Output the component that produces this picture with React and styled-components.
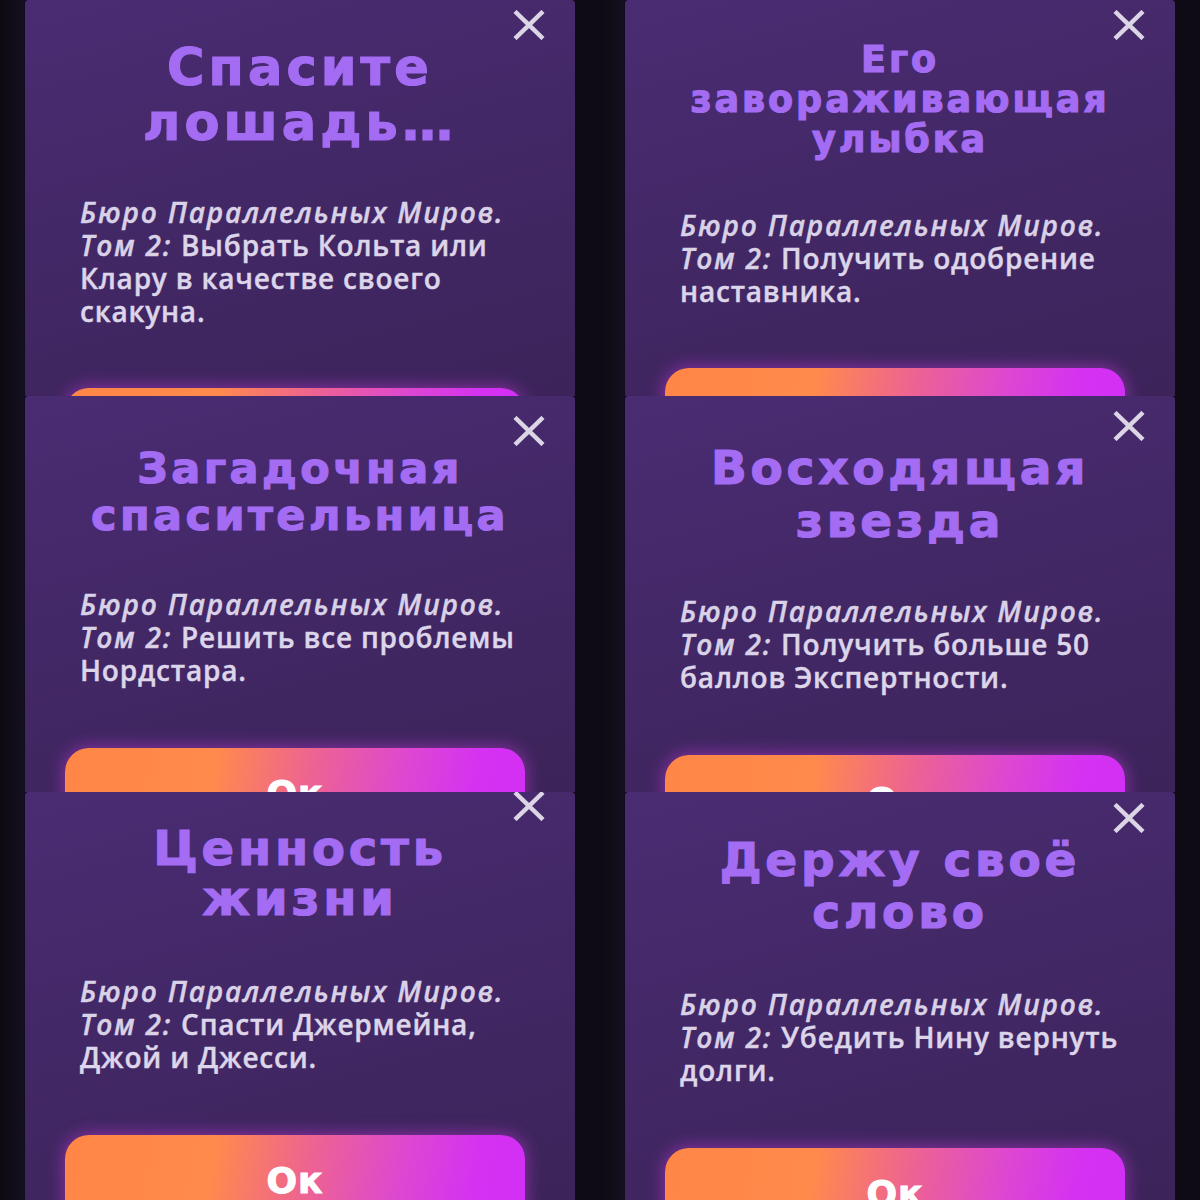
import React from 'react';
import styled, { createGlobalStyle } from 'styled-components';

const GlobalStyle = createGlobalStyle`
  html, body {
    margin: 0;
    padding: 0;
    background: #0e0b14;
  }
`;

const BODY_LH = 33;

const cards = [
  {
    title: ['Спасите', 'лошадь…'],
    titleSize: 51,
    titleLh: 55,
    titleTop: 40,
    closeTop: 10,
    body: [
      [['Бюро Параллельных Миров.', true]],
      [['Том 2: ', true], ['Выбрать Кольта или', false]],
      [['Клару в качестве своего', false]],
      [['скакуна.', false]],
    ],
    bodyTop: 196,
    buttonTop: 388,
  },
  {
    title: ['Его', 'завораживающая', 'улыбка'],
    titleSize: 36.5,
    titleLh: 40,
    titleTop: 40,
    closeTop: 10,
    body: [
      [['Бюро Параллельных Миров.', true]],
      [['Том 2: ', true], ['Получить одобрение', false]],
      [['наставника.', false]],
    ],
    bodyTop: 209,
    buttonTop: 368,
  },
  {
    title: ['Загадочная', 'спасительница'],
    titleSize: 43,
    titleLh: 47,
    titleTop: 49,
    closeTop: 20,
    body: [
      [['Бюро Параллельных Миров.', true]],
      [['Том 2: ', true], ['Решить все проблемы', false]],
      [['Нордстара.', false]],
    ],
    bodyTop: 192,
    buttonTop: 352,
  },
  {
    title: ['Восходящая', 'звезда'],
    titleSize: 47,
    titleLh: 53,
    titleTop: 45,
    closeTop: 15,
    body: [
      [['Бюро Параллельных Миров.', true]],
      [['Том 2: ', true], ['Получить больше 50', false]],
      [['баллов Экспертности.', false]],
    ],
    bodyTop: 199,
    buttonTop: 359,
  },
  {
    title: ['Ценность', 'жизни'],
    titleSize: 48,
    titleLh: 50,
    titleTop: 31,
    closeTop: -1,
    body: [
      [['Бюро Параллельных Миров.', true]],
      [['Том 2: ', true], ['Спасти Джермейна,', false]],
      [['Джой и Джесси.', false]],
    ],
    bodyTop: 183,
    buttonTop: 343,
  },
  {
    title: ['Держу своё', 'слово'],
    titleSize: 47,
    titleLh: 52,
    titleTop: 42,
    closeTop: 11,
    body: [
      [['Бюро Параллельных Миров.', true]],
      [['Том 2: ', true], ['Убедить Нину вернуть', false]],
      [['долги.', false]],
    ],
    bodyTop: 196,
    buttonTop: 356,
  },
];

const Collage = styled.div`
  display: grid;
  grid-template-columns: 600px 600px;
  grid-template-rows: 396px 396px 408px;
  width: 1200px;
  height: 1200px;
  overflow: hidden;
`;

const Cell = styled.div`
  position: relative;
  overflow: hidden;
  background: linear-gradient(90deg, #0c0a12 0%, #151020 4%, #0e0b14 100%);
  padding: 0 25px;
`;

const Dialog = styled.div`
  position: relative;
  height: 100%;
  display: flex;
  flex-direction: column;
  background: linear-gradient(165deg, #4a2c73 0%, #432867 45%, #3c2459 100%);
  box-shadow: 0 0 0 1px rgba(20, 10, 30, 0.6);
  border-radius: 4px 4px 0 0;
`;

const Close = styled.button`
  position: absolute;
  top: ${p => p.$top}px;
  right: 29px;
  width: 34px;
  height: 30px;
  padding: 0;
  border: none;
  background: none;
  cursor: pointer;

  svg {
    display: block;
  }
`;

const Title = styled.h2`
  margin: ${p => p.$top}px 0 0;
  font-family: 'DejaVu Sans', 'Open Sans', sans-serif;
  font-weight: 700;
  font-size: ${p => p.$size}px;
  line-height: ${p => p.$lh}px;
  letter-spacing: 0.08em;
  text-align: center;
  color: #a46cf2;
  -webkit-text-stroke: 1.2px #a46cf2;
`;

const TitleLine = styled.span`
  display: block;
  white-space: nowrap;
`;

const Body = styled.p`
  margin: ${p => p.$top}px 0 0;
  padding-left: 55px;
  font-family: 'Open Sans', 'DejaVu Sans', sans-serif;
  font-weight: 600;
  font-size: 28px;
  line-height: ${BODY_LH}px;
  letter-spacing: 0.8px;
  color: #ddd5e9;
  -webkit-text-stroke: 0.4px #ddd5e9;
`;

const BodyLine = styled.span`
  display: block;
  white-space: nowrap;
`;

const Book = styled.em`
  font-style: italic;
  letter-spacing: 1.8px;
  color: #d9d1e6;
`;

const OkButton = styled.button`
  flex-shrink: 0;
  margin: ${p => p.$top}px 0 0 40px;
  width: 460px;
  height: 90px;
  border: none;
  border-radius: 24px;
  background: linear-gradient(100deg, #ff8646 0%, #ff8a4c 32%, #ee6490 52%, #dd48d0 72%, #d531f2 88%, #d22ff5 100%);
  box-shadow: 0 0 16px 2px rgba(214, 60, 240, 0.45);
  font-family: 'DejaVu Sans', sans-serif;
  font-weight: 700;
  font-size: 36px;
  letter-spacing: 1px;
  color: #ffffff;
  -webkit-text-stroke: 1px #ffffff;
  cursor: pointer;
`;

const CloseIcon = () => (
  <svg width="34" height="30" viewBox="0 0 34 30">
    <path d="M3 1.5 L31 28.5 M31 1.5 L3 28.5" stroke="#dcd5e6" strokeWidth="4.5" strokeLinecap="butt" fill="none" />
  </svg>
);

const Card = ({ card }) => {
  const titleEnd = card.titleTop + card.title.length * card.titleLh;
  const bodyEnd = card.bodyTop + card.body.length * BODY_LH;
  return (
    <Cell>
      <Dialog>
        <Close $top={card.closeTop} aria-label="Закрыть">
          <CloseIcon />
        </Close>
        <Title $top={card.titleTop} $size={card.titleSize} $lh={card.titleLh}>
          {card.title.map(line => (
            <TitleLine key={line}>{line}</TitleLine>
          ))}
        </Title>
        <Body $top={card.bodyTop - titleEnd}>
          {card.body.map((line, i) => (
            <BodyLine key={i}>
              {line.map(([text, italic], j) =>
                italic ? <Book key={j}>{text}</Book> : <span key={j}>{text}</span>
              )}
            </BodyLine>
          ))}
        </Body>
        <OkButton $top={card.buttonTop - bodyEnd}>Ок</OkButton>
      </Dialog>
    </Cell>
  );
};

export default function App() {
  return (
    <>
      <GlobalStyle />
      <Collage>
        {cards.map((card, i) => (
          <Card key={i} card={card} />
        ))}
      </Collage>
    </>
  );
}
